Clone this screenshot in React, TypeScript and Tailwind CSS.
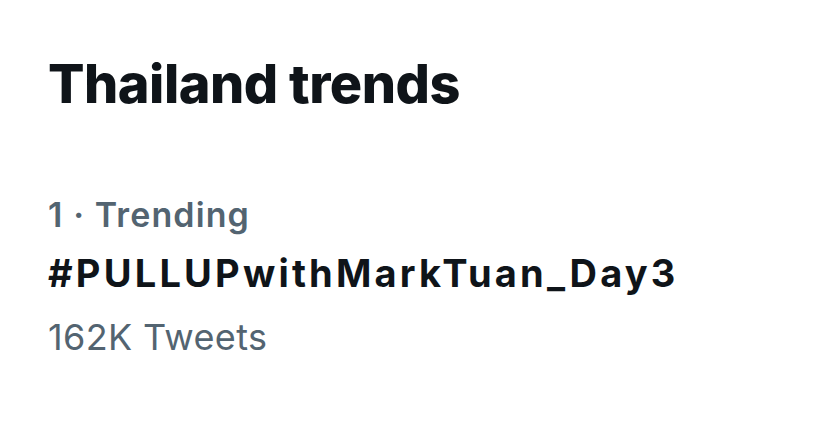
import React from 'react';

const font = { fontFamily: 'Inter, "Noto Sans", sans-serif' };

export default function App() {
  return (
    <main className="min-h-screen w-full bg-white px-[48px] pt-[52px]" style={font}>
      {/* Heading */}
      <h1 className="text-[54px] leading-[64px] font-extrabold text-[#0f1419] tracking-[-0.5px]">
        Thailand trends
      </h1>

      {/* Trend item */}
      <div className="mt-[79px]">
        <div className="text-[34px] leading-[40px] font-semibold text-[#536471] tracking-[1.1px]">
          1 · Trending
        </div>
        <div className="mt-[16px] text-[38px] leading-[44px] font-bold text-[#0f1419] tracking-[3.2px]">
          #PULLUPwithMarkTuan_Day3
        </div>
        <div className="mt-[20px] text-[36px] leading-[44px] font-normal text-[#536471] tracking-[0.35px]">
          162K Tweets
        </div>
      </div>
    </main>
  );
}
